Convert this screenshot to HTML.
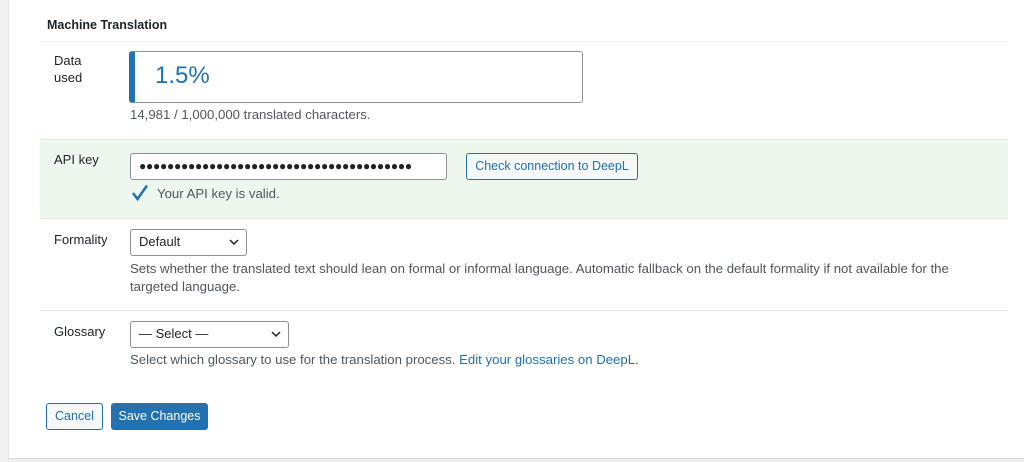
<!DOCTYPE html>
<html><head><style>
*{box-sizing:border-box;margin:0;padding:0}
body{width:1024px;height:462px;background:#fff;font-family:"Liberation Sans",sans-serif;font-size:13px;color:#3c434a;position:relative;overflow:hidden}
.a{position:absolute}
.lbl{color:#1d2327;font-size:13px}
.desc{color:#50575e;font-size:13.2px}
.sel{border:1px solid #8c8f94;border-radius:3px;background:#fff;color:#1d2327;padding:0 8px;line-height:24px;font-size:13px}
.sel svg{position:absolute;right:7px;top:9px}
</style></head><body>
<div class="a" style="left:0;top:0;width:9px;height:462px;background:#f0f0f1;border-right:1px solid #e2e4e7"></div>
<div class="a" style="left:9px;top:458px;width:1015px;height:4px;background:#f0f0f1;border-top:1px solid #dcdcde"></div>
<div class="a lbl" style="left:47px;top:18px;font-weight:bold;font-size:12.5px">Machine Translation</div>
<div class="a" style="left:40px;top:41px;width:968px;height:1px;background:#f0f0f1"></div>
<div class="a lbl" style="left:54px;top:52px;line-height:17px">Data<br>used</div>
<div class="a" style="left:129px;top:51px;width:454px;height:52px;border:1px solid #8c8f94;border-left:6px solid #2271b1;border-radius:3px"></div>
<div class="a" style="left:155px;top:62px;font-size:24px;color:#2271b1">1.5%</div>
<div class="a desc" style="left:130px;top:107px">14,981 / 1,000,000 translated characters.</div>
<div class="a" style="left:40px;top:139px;width:968px;height:80px;background:#edf7ed;border-top:1px solid #e4e9e4;border-bottom:1px solid #e4e9e4"></div>
<div class="a lbl" style="left:54px;top:152px">API key</div>
<div class="a" style="left:130px;top:153px;width:317px;height:27px;border:1px solid #8c8f94;border-radius:3px;background:#fff;font-size:12px;line-height:25px;padding-left:8px;letter-spacing:-0.25px;color:#1d2327;overflow:hidden;white-space:nowrap">●●●●●●●●●●●●●●●●●●●●●●●●●●●●●●●●●●●●●●●</div>
<div class="a" style="left:466px;top:153px;width:172px;height:27px;border:1px solid #2271b1;border-radius:3px;background:#f6f7f7;color:#2271b1;text-align:center;line-height:25px;font-size:12.5px">Check connection to DeepL</div>
<svg class="a" style="left:131px;top:184px" width="18" height="17" viewBox="0 0 18 17"><path d="M2 9 L6.5 15 L16 1.5" fill="none" stroke="#2271b1" stroke-width="2.6"/></svg>
<div class="a desc" style="left:157px;top:186px">Your API key is valid.</div>
<div class="a lbl" style="left:54px;top:232px">Formality</div>
<div class="a sel" style="left:130px;top:229px;width:117px;height:27px">Default<svg width="10" height="7" viewBox="0 0 10 7"><path d="M1 1 L5 5 L9 1" fill="none" stroke="#1d2327" stroke-width="1.5"/></svg></div>
<div class="a desc" style="left:130px;top:260px;line-height:18px">Sets whether the translated text should lean on formal or informal language. Automatic fallback on the default formality if not available for the<br>targeted language.</div>
<div class="a" style="left:40px;top:310px;width:968px;height:1px;background:#e2e4e7"></div>
<div class="a lbl" style="left:54px;top:324px">Glossary</div>
<div class="a sel" style="left:130px;top:321px;width:159px;height:27px">— Select —<svg width="10" height="7" viewBox="0 0 10 7"><path d="M1 1 L5 5 L9 1" fill="none" stroke="#1d2327" stroke-width="1.5"/></svg></div>
<div class="a desc" style="left:130px;top:352px">Select which glossary to use for the translation process. <span style="color:#2271b1">Edit your glossaries on DeepL</span>.</div>
<div class="a" style="left:46px;top:403px;width:57px;height:27px;border:1px solid #2271b1;border-radius:3px;background:#f6f7f7;color:#2271b1;text-align:center;line-height:25px;font-size:12.5px">Cancel</div>
<div class="a" style="left:111px;top:403px;width:97px;height:27px;border:1px solid #2271b1;border-radius:3px;background:#2271b1;color:#fff;text-align:center;line-height:25px;font-size:12.5px">Save Changes</div>
</body></html>
